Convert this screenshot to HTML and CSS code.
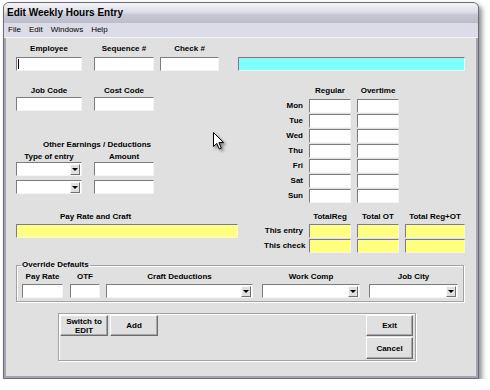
FILE: index.html
```html
<!DOCTYPE html>
<html lang="en">
<head>
  <meta charset="UTF-8" />
  <title>Edit Weekly Hours Entry</title>
  <link rel="stylesheet" href="styles.css">
</head>
<body>
  <div class="window">
    <div class="titlebar">Edit Weekly Hours Entry</div>
    <div class="menubar">
      <span>File</span><span>Edit</span><span>Windows</span><span>Help</span>
    </div>

    <div class="client">
      <div class="row-top">
        <div class="field w66"><div class="lbl">Employee</div><div class="box"><span class="caret"></span></div></div>
        <div class="field w60 gap12"><div class="lbl">Sequence #</div><div class="box"></div></div>
        <div class="field w59 gap6"><div class="lbl">Check #</div><div class="box"></div></div>
        <div class="field w227 gap19"><div class="lbl">&nbsp;</div><div class="box cyan"></div></div>
      </div>

      <div class="middle">
        <div class="left-col">
          <div class="codes">
            <div class="field w66"><div class="lbl">Job Code</div><div class="box"></div></div>
            <div class="field w60 gap12"><div class="lbl">Cost Code</div><div class="box"></div></div>
          </div>
          <div class="lbl other-title">Other Earnings / Deductions</div>
          <div class="codes">
            <div class="field w66">
              <div class="lbl">Type of entry</div>
              <div class="box combo"><span class="arrow"></span></div>
              <div class="box combo next"><span class="arrow"></span></div>
            </div>
            <div class="field w60 gap12">
              <div class="lbl">Amount</div>
              <div class="box"></div>
              <div class="box next"></div>
            </div>
          </div>
        </div>

        <div class="hours-grid">
          <span></span><div class="lbl">Regular</div><div class="lbl">Overtime</div>
          <div class="day">Mon</div><div class="box"></div><div class="box"></div>
          <div class="day">Tue</div><div class="box"></div><div class="box"></div>
          <div class="day">Wed</div><div class="box"></div><div class="box"></div>
          <div class="day">Thu</div><div class="box"></div><div class="box"></div>
          <div class="day">Fri</div><div class="box"></div><div class="box"></div>
          <div class="day">Sat</div><div class="box"></div><div class="box"></div>
          <div class="day">Sun</div><div class="box"></div><div class="box"></div>
        </div>
      </div>

      <div class="totals">
        <div class="left-col">
          <div class="lbl pay-lbl">Pay Rate and Craft</div>
          <div class="box yellow w222"></div>
        </div>
        <div class="totals-grid">
          <span></span><div class="lbl">TotalReg</div><div class="lbl">Total OT</div><div class="lbl">Total Reg+OT</div>
          <div class="day">This entry</div><div class="box yellow"></div><div class="box yellow"></div><div class="box yellow"></div>
          <div class="day">This check</div><div class="box yellow"></div><div class="box yellow"></div><div class="box yellow"></div>
        </div>
      </div>

      <fieldset class="override">
        <legend>Override Defaults</legend>
        <div class="override-row">
          <div class="field w41"><div class="lbl">Pay Rate</div><div class="box"></div></div>
          <div class="field w30 gap7"><div class="lbl">OTF</div><div class="box"></div></div>
          <div class="field w147 gap6"><div class="lbl">Craft Deductions</div><div class="box combo"><span class="arrow"></span></div></div>
          <div class="field w98 gap9"><div class="lbl">Work Comp</div><div class="box combo"><span class="arrow"></span></div></div>
          <div class="field w89 gap9"><div class="lbl">Job City</div><div class="box combo"><span class="arrow"></span></div></div>
        </div>
      </fieldset>

      <div class="actions">
        <div class="btn-row">
          <button class="btn">Switch to<br>EDIT</button>
          <button class="btn">Add</button>
        </div>
        <div class="btn-col">
          <button class="btn">Exit</button>
          <button class="btn tall">Cancel</button>
        </div>
      </div>
    </div>

    <svg class="pointer" width="12" height="18" viewBox="0 0 12 18">
      <path d="M0.5 0.5 L0.5 14.5 L3.8 11.4 L6.3 17 L8.3 16.1 L5.9 10.6 L10.5 10.6 Z" fill="#fff" stroke="#000" stroke-width="1"/>
    </svg>
  </div>
</body>
</html>
```

FILE: styles.css
```css
body {
  margin: 0;
  background: #fff;
  font-family: "Liberation Sans", Arial, sans-serif;
  font-size: 8px;
  color: #000;
}
.window {
  position: relative;
  box-sizing: border-box;
  width: 476px;
  height: 377px;
  margin: 2px 0 0 3px;
  border: 1px solid #6c6c78;
  border-radius: 6px 6px 0 0;
  background: #a4a4b2;
  box-shadow: 3px 3px 5px rgba(0,0,0,0.45);
  display: flex;
  flex-direction: column;
}
.titlebar {
  height: 20px;
  line-height: 20px;
  padding-left: 3px;
  font-size: 10px;
  font-weight: bold;
  border-radius: 5px 5px 0 0;
  background: linear-gradient(180deg, #f4f4f8 0%, #dedee8 45%, #c6c6d4 60%, #bcbccc 100%);
}
.menubar {
  height: 14px;
  line-height: 14px;
  background: #dcdce8;
  border-bottom: 1px solid #f6f6fa;
  display: flex;
}
.menubar span {
  padding: 0 4px;
  font-size: 8px;
}
.client {
  flex: 1;
  margin: 0 2px 2px 2px;
  padding: 6px 0 0 10px;
  background: #e0e0e0;
}

.lbl {
  font-weight: bold;
  line-height: 10px;
  height: 10px;
  text-align: center;
  white-space: nowrap;
}
.box {
  box-sizing: border-box;
  height: 14px;
  background: #fff;
  border: 1px solid;
  border-color: #7c7c7c #f4f4f4 #f4f4f4 #7c7c7c;
}
.cyan { background: #80ffff; }
.yellow { background: #ffff80; }
.caret {
  display: block;
  width: 1px;
  height: 10px;
  margin: 1px 0 0 1px;
  background: #000;
}

.field {
  display: flex;
  flex-direction: column;
}
.field .lbl { margin-bottom: 3px; }
.w30 { width: 30px; }
.w41 { width: 41px; }
.w59 { width: 59px; }
.w60 { width: 60px; }
.w66 { width: 66px; }
.w89 { width: 89px; }
.w98 { width: 98px; }
.w147 { width: 147px; }
.w222 { width: 222px; }
.w227 { width: 227px; }
.gap6 { margin-left: 6px; }
.gap7 { margin-left: 7px; }
.gap9 { margin-left: 9px; }
.gap12 { margin-left: 12px; }
.gap19 { margin-left: 19px; }

.row-top {
  display: flex;
}

.middle {
  display: flex;
  margin-top: 15px;
}
.left-col {
  width: 248px;
}
.codes {
  display: flex;
}
.codes .field .lbl { margin-bottom: 1px; }
.other-title {
  margin-top: 29px;
  width: 138px;
  padding-left: 12px;
  text-align: center;
}
.other-title + .codes { margin-top: 2px; }
.other-title + .codes .field .lbl { margin-bottom: 0; }
.box.next { margin-top: 4px; }

.combo {
  display: flex;
  justify-content: flex-end;
  align-items: center;
  padding-right: 1px;
}
.arrow {
  box-sizing: border-box;
  width: 10px;
  height: 11px;
  background: #e0e0e0;
  border: 1px solid;
  border-color: #fafafa #707070 #707070 #fafafa;
  display: flex;
  justify-content: center;
  align-items: center;
}
.arrow::after {
  content: "";
  border-left: 3px solid transparent;
  border-right: 3px solid transparent;
  border-top: 3px solid #000;
}

.hours-grid {
  display: grid;
  grid-template-columns: 39px 42px 42px;
  grid-template-rows: 12px repeat(7, 14px);
  column-gap: 6px;
  row-gap: 1px;
}
.day {
  font-weight: bold;
  text-align: right;
  line-height: 14px;
  white-space: nowrap;
}

.totals {
  display: flex;
  margin-top: 9px;
}
.pay-lbl {
  text-align: left;
  padding-left: 44px;
  margin-bottom: 2px;
}
.totals-grid {
  display: grid;
  grid-template-columns: 39px 42px 42px 60px;
  grid-template-rows: 11px 14px 14px;
  column-gap: 6px;
  row-gap: 1px;
}

.override {
  box-sizing: border-box;
  width: 448px;
  margin: 7px 0 0 0;
  padding: 2px 5px 3px 5px;
  border: 1px solid #a2a2a2;
  box-shadow: 1px 1px 0 #fff, inset 1px 1px 0 #fff;
  min-width: 0;
}
.override legend {
  font-weight: bold;
  line-height: 10px;
  padding: 0 1px;
  margin-left: -1px;
}
.override-row {
  display: flex;
}
.override-row .field .lbl { margin-bottom: 2px; }

.actions {
  box-sizing: border-box;
  width: 358px;
  margin: 11px 0 0 42px;
  padding: 1px 2px 1px 1px;
  border: 1px solid #a2a2a2;
  box-shadow: 1px 1px 0 #fff, inset 1px 1px 0 #fff;
  display: flex;
  justify-content: space-between;
}
.btn-row {
  display: flex;
  gap: 2px;
  align-items: flex-start;
}
.btn-col {
  display: flex;
  flex-direction: column;
  gap: 1px;
}
.btn {
  box-sizing: border-box;
  width: 48px;
  height: 21px;
  padding: 0;
  font-family: "Liberation Sans", Arial, sans-serif;
  font-size: 8px;
  font-weight: bold;
  line-height: 9px;
  color: #000;
  background: #e0e0e0;
  border: 1px solid;
  border-color: #fcfcfc #6c6c6c #6c6c6c #fcfcfc;
  box-shadow: inset -1px -1px 0 #a8a8a8;
}
.btn-col .btn { width: 47px; }
.btn.tall { height: 22px; }

.pointer {
  position: absolute;
  left: 209px;
  top: 129px;
  filter: drop-shadow(2px 2px 1.5px rgba(0,0,0,0.45));
}
```
